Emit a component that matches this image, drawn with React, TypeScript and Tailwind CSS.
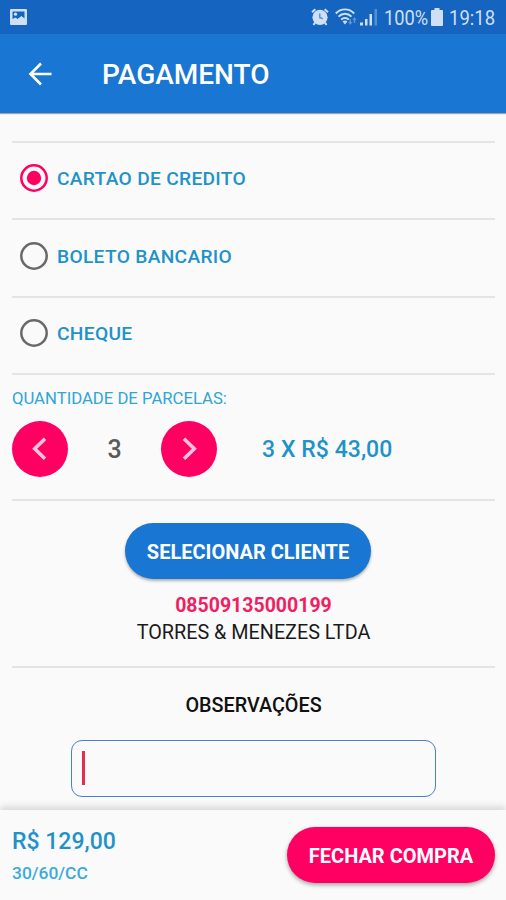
import React from 'react';

const METHODS = [
  { id: 'card', label: 'CARTAO DE CREDITO' },
  { id: 'boleto', label: 'BOLETO BANCARIO' },
  { id: 'cheque', label: 'CHEQUE' },
];

const StatusBar = () => (
  <div className="flex h-[34px] shrink-0 items-center justify-between bg-[#1565c0] pl-[10px] pr-[11px] text-[#cfdff5]">
    <svg width="17" height="16" viewBox="0 0 17 16">
      <path fillRule="evenodd" fill="currentColor" d="M1 0h15a1 1 0 0 1 1 1v14a1 1 0 0 1-1 1H1a1 1 0 0 1-1-1V1a1 1 0 0 1 1-1zM2.500 2.500v7.500l3-1.500 2 1.500 4-3 3 2.500V2.500z" />
      <circle cx="5.500" cy="5.200" r="1.600" fill="currentColor" />
    </svg>
    <div className="flex items-center">
      <svg className="mr-[6px]" width="18" height="18" viewBox="0 0 18 18">
        <g fill="none" stroke="currentColor">
          <path strokeWidth="2" d="M1 4.200l3.300-3M17 4.200l-3.300-3M4 14.500L2.500 17M14 14.500l1.500 2.500" />
        </g>
        <circle cx="9" cy="9.300" r="7.600" fill="currentColor" />
        <path fill="none" stroke="#5289d2" strokeWidth="1.300" d="M8.800 5.500v4.200l3 1" />
      </svg>
      <svg className="mr-[3px]" width="22" height="18" viewBox="0 0 22 18">
        <g fill="none" stroke="currentColor" strokeWidth="1.900">
          <path d="M.8 5.500c5-5.500 13.400-5.500 18.400 0" />
          <path d="M3.500 8.600c3.700-3.800 9.300-3.800 13 0" />
          <path d="M6.200 11.700c2.100-2.200 5.500-2.200 7.600 0" />
        </g>
        <path fill="currentColor" d="M7.600 13.400c1.400-1.200 3.400-1.200 4.800 0L10 16.500z" />
        <path fill="currentColor" opacity=".4" d="M13 14h1.500v-3H16v3h1.500l-2.200 3zM17.500 12h1.300v3h1.400v-3h1.300l-2-3z" />
      </svg>
      <svg className="mr-[6px]" width="18" height="18" viewBox="0 0 18 18">
        <path fill="currentColor" d="M0 14.500h3V17.500H0zM5 11h2.500v6.500H5zM9.500 6H12v11.500H9.500z" />
        <path fill="currentColor" opacity=".35" d="M14.500 1H17v16.500h-2.500z" />
      </svg>
      <span className="w-[47px] whitespace-nowrap text-[21px] leading-none">
        <span className="inline-block origin-left scale-x-[.87] pt-[2px]">100%</span>
      </span>
      <svg className="mr-[6px]" width="12" height="18" viewBox="0 0 12 18">
        <path fill="currentColor" d="M3.500 0h5v2H11a1 1 0 0 1 1 1v14a1 1 0 0 1-1 1H1a1 1 0 0 1-1-1V3a1 1 0 0 1 1-1h2.500z" />
      </svg>
      <span className="w-[46px] whitespace-nowrap text-[21px] leading-none">
        <span className="inline-block origin-left scale-x-[.88] pt-[2px]">19:18</span>
      </span>
    </div>
  </div>
);

const Radio = ({ checked }: { checked: boolean }) => (
  <svg width="28" height="28" viewBox="0 0 28 28" className={checked ? 'text-[#ff0062]' : 'text-[#696969]'}>
    <circle cx="14" cy="14" r="12.700" fill="none" stroke="currentColor" strokeWidth="2.500" />
    {checked && <circle cx="14" cy="14" r="7.200" fill="currentColor" />}
  </svg>
);

const StepButton = ({ d, label }: { d: string; label: string }) => (
  <button aria-label={label} className="flex size-[56px] items-center justify-center rounded-full bg-[#ff0062]">
    <svg width="56" height="56" viewBox="0 0 56 56">
      <path d={d} fill="none" stroke="#ffc4dc" strokeWidth="3.600" />
    </svg>
  </button>
);

export default function App() {
  const [method, setMethod] = React.useState('card');

  return (
    <div className="flex h-[900px] w-[506px] flex-col overflow-hidden bg-[#fafafa] font-['Roboto',sans-serif]">
      <StatusBar />

      {/* App bar */}
      <header className="z-10 flex h-[79px] shrink-0 items-center bg-[#1976d2] pl-[28px] text-white shadow-[0_1px_1px_rgba(0,0,0,0.35)]">
        <svg width="24" height="24" viewBox="0 0 24 24">
          <path d="M23.500 12H2.500M13 1.500L2.500 12 13 22.500" fill="none" stroke="currentColor" strokeWidth="2.600" />
        </svg>
        <h1 className="ml-[50px] pt-[2px] text-[28px] font-medium leading-none">PAGAMENTO</h1>
      </header>

      <main className="flex min-h-0 flex-1 flex-col pl-[12px] pr-[11px] pt-[28px]">
        {METHODS.map((m) => (
          <button
            key={m.id}
            onClick={() => setMethod(m.id)}
            className="flex h-[77.330px] shrink-0 items-center border-t-2 border-[#e4e4e4] pb-[4.500px] pl-[8px] text-left"
          >
            <Radio checked={method === m.id} />
            <span className="ml-[9px] pt-px text-[19.200px] font-medium leading-none tracking-[0.300px] text-[#1f93c8]">{m.label}</span>
          </button>
        ))}

        {/* Installments */}
        <section className="h-[126px] shrink-0 border-t-2 border-[#e4e4e4] pt-[14px]">
          <p className="text-[16.700px] leading-[20px] text-[#2fa6d6]">QUANTIDADE DE PARCELAS:</p>
          <div className="mt-[12px] flex items-center">
            <StepButton label="Menos" d="M33 17.700L22.700 27.700 33 37.700" />
            <span className="w-[93px] pt-[2px] text-center text-[25px] font-medium text-[#5a5a5a]">3</span>
            <StepButton label="Mais" d="M23 17.700L33.300 27.700 23 37.700" />
            <span className="ml-[45px] pt-[2px] text-[23px] font-medium tracking-[0.050px] text-[#1f93c8]">3 X R$ 43,00</span>
          </div>
        </section>

        {/* Customer */}
        <section className="flex h-[167px] shrink-0 flex-col items-center border-t-2 border-[#e4e4e4] pt-[22px]">
          <button className="mr-[11px] h-[56px] w-[246px] rounded-full bg-[#1976d2] pt-[2px] text-[20px] font-bold text-white shadow-[0_2px_3px_rgba(0,0,0,0.3)]">
            SELECIONAR CLIENTE
          </button>
          <p className="mt-[13px] text-[19.500px] font-bold leading-[27px] text-[#f01f62]">08509135000199</p>
          <p className="text-[19.800px] leading-[27px] text-[#1a1a1a]">TORRES &amp; MENEZES LTDA</p>
        </section>

        <section className="flex shrink-0 flex-col items-center border-t-2 border-[#e4e4e4] pt-[26px]">
          <h2 className="text-[19.800px] font-medium leading-[24px] text-[#111]">OBSERVAÇÕES</h2>
          <div className="mt-[22px] flex h-[57px] w-[365px] items-center rounded-[11px] border border-[#4a80c8] pl-[10px]">
            <span className="h-[34px] w-[3px] bg-[#e42d52]" />
          </div>
        </section>
      </main>

      {/* Checkout bar */}
      <footer className="z-10 flex h-[90px] shrink-0 items-center justify-between bg-[#fafafa] pl-[12px] pr-[11px] shadow-[0_-4px_6px_rgba(0,0,0,0.12)]">
        <div>
          <p className="pt-px text-[23px] font-medium leading-[30px] text-[#1f93c8]">R$ 129,00</p>
          <p className="mt-[4px] text-[17.400px] font-medium leading-[24px] text-[#3aaada]">30/60/CC</p>
        </div>
        <button className="h-[56px] w-[208px] rounded-full bg-[#ff0062] pt-[2px] text-[20px] font-bold text-white shadow-[0_2px_4px_rgba(0,0,0,0.35)]">
          FECHAR COMPRA
        </button>
      </footer>
    </div>
  );
}
